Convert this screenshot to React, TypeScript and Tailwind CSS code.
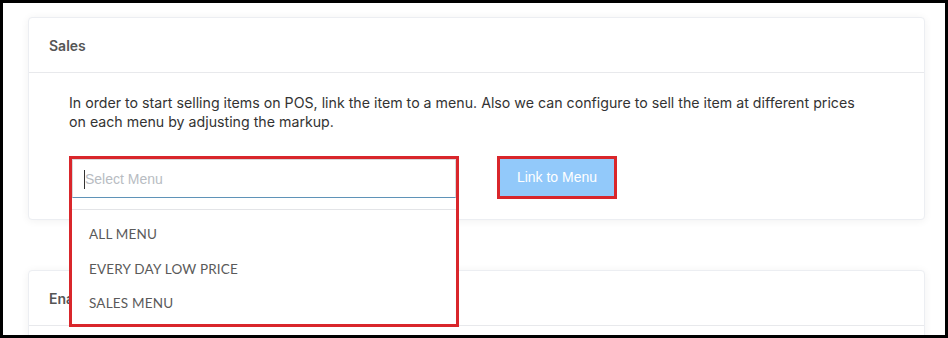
import React from "react";

const MENUS = ["ALL MENU", "EVERY DAY LOW PRICE", "SALES MENU"];

export default function App() {
  return (
    <div className="w-[948px] h-[338px] overflow-hidden border-[3px] border-black bg-white font-['Inter',sans-serif]">
      <div className="flex flex-col gap-[50px] pl-[25px] pt-[14px]">
        {/* Sales card */}
        <section className="w-[897px] rounded-[4px] border border-[#eceef2] bg-white shadow-[0_1px_8px_rgba(0,0,0,0.06)]">
          <header className="h-[55px] flex items-center px-[20px] border-b border-[#e8e9ec]">
            <h2 className="text-[14px] font-semibold text-[#555]">Sales</h2>
          </header>
          <div className="pl-[40px] pr-[40px] pt-[20px] pb-[20px]">
            <p className="text-[14.2px] leading-[19px] text-[#333] max-w-[792px]">
              In order to start selling items on POS, link the item to a menu. Also we can configure to sell the item at different prices on each menu by adjusting the markup.
            </p>
            <div className="mt-[25px] flex items-start gap-[38px]">
              <div className="relative w-[390px] h-[43px]">
                {/* annotated dropdown, open */}
                <div className="absolute top-0 left-0 z-10 w-[390px] h-[171px] border-[3px] border-[#d9262b] bg-white">
                  <div className="h-[39px] border border-[#d7d9dc] border-b-[#5f93b8] flex items-center pl-[11px] pt-[1px]">
                    <span className="w-px h-[19px] bg-[#333]" />
                    <span className="text-[14px] text-[#b8bcc2] font-['Liberation_Sans',sans-serif]">Select Menu</span>
                  </div>
                  <ul className="mt-[11px] border-t border-[#e3e4e7] pt-[14px] font-['Lato',sans-serif]">
                    {MENUS.map((m) => (
                      <li key={m} className="h-[34.5px] pl-[17px] text-[13.5px] text-[#5a5a5a] tracking-[0.2px]">
                        {m}
                      </li>
                    ))}
                  </ul>
                </div>
              </div>
              <div className="border-[3px] border-[#d9262b]">
                <button className="w-[114px] h-[37px] bg-[#92c9fa] text-white text-[14px] font-['Liberation_Sans',sans-serif]">
                  Link to Menu
                </button>
              </div>
            </div>
          </div>
        </section>

        {/* Enable card */}
        <section className="w-[897px] h-[120px] rounded-[4px] border border-[#eceef2] bg-white shadow-[0_1px_8px_rgba(0,0,0,0.06)]">
          <header className="h-[55px] flex items-center px-[20px] border-b border-[#e8e9ec]">
            <h2 className="text-[14px] font-semibold text-[#555]">Enable</h2>
          </header>
        </section>
      </div>
    </div>
  );
}
